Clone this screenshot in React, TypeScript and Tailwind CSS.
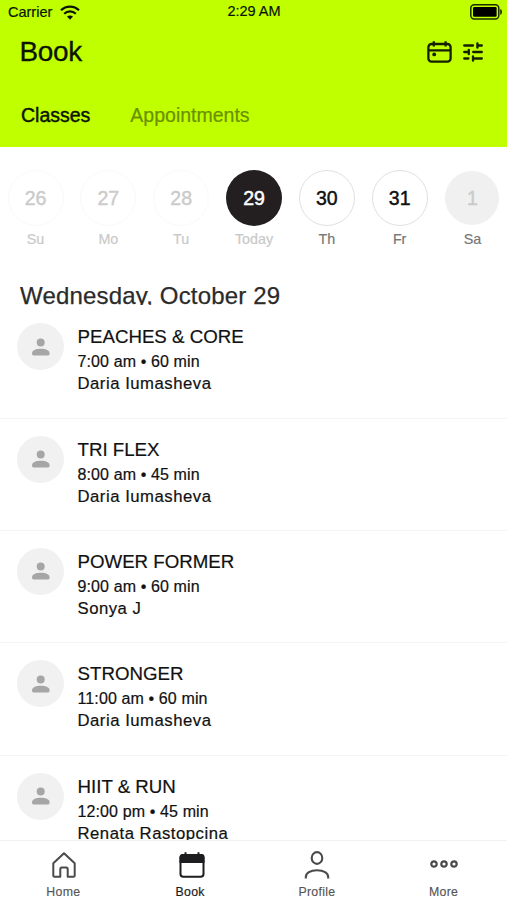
import type { ReactNode } from "react";

type Day = { date: string; label: string; circle: string; text: string };

const days: Day[] = [
  { date: "26", label: "Su", circle: "h-[56px] w-[56px] border border-[#fafafa] text-[#cbcbcb]", text: "text-[#c9c9c9]" },
  { date: "27", label: "Mo", circle: "h-[56px] w-[56px] border border-[#fafafa] text-[#cbcbcb]", text: "text-[#c9c9c9]" },
  { date: "28", label: "Tu", circle: "h-[56px] w-[56px] border border-[#fafafa] text-[#cbcbcb]", text: "text-[#c9c9c9]" },
  { date: "29", label: "Today", circle: "h-[56px] w-[56px] bg-[#231f20] text-white", text: "text-[#c9c9c9]" },
  { date: "30", label: "Th", circle: "h-[56px] w-[56px] border border-[#e0e0e0] text-[#111]", text: "text-[#777]" },
  { date: "31", label: "Fr", circle: "h-[56px] w-[56px] border border-[#e0e0e0] text-[#111]", text: "text-[#777]" },
  { date: "1", label: "Sa", circle: "h-[54px] w-[54px] bg-[#f0f0f0] text-[#cbcbcb]", text: "text-[#777]" },
];

const classes = [
  { title: "PEACHES & CORE", time: "7:00 am • 60 min", coach: "Daria Iumasheva" },
  { title: "TRI FLEX", time: "8:00 am • 45 min", coach: "Daria Iumasheva" },
  { title: "POWER FORMER", time: "9:00 am • 60 min", coach: "Sonya J" },
  { title: "STRONGER", time: "11:00 am • 60 min", coach: "Daria Iumasheva" },
  { title: "HIIT & RUN", time: "12:00 pm • 45 min", coach: "Renata Rastopcina" },
];

function Wifi() {
  return (
    <svg width="20" height="15" viewBox="0 0 20 15" fill="none" stroke="#0b1400" strokeWidth="2.2">
      <path d="M1 5.2C6 .3 14 .3 19 5.2" />
      <path d="M4.2 8.7c3.3-3.2 8.3-3.2 11.6 0" />
      <path d="M7 11.5c1.7-1.5 4.3-1.5 6 0L10 14.7z" fill="#0b1400" stroke="none" />
    </svg>
  );
}

function Battery() {
  return (
    <svg width="33" height="16" viewBox="0 0 33 16">
      <rect x=".8" y=".8" width="28" height="14.2" rx="3.4" fill="none" stroke="#1c2c00" strokeWidth="1.5" />
      <rect x="3" y="3" width="23.6" height="9.8" rx="1.2" fill="#000" />
      <path d="M30.2 5c2.4.6 2.4 5.2 0 5.8z" fill="#1c2c00" />
    </svg>
  );
}

function CalendarIcon() {
  return (
    <svg width="25" height="22" viewBox="0 0 25 22" fill="none" stroke="#142000" strokeWidth="2.3">
      <rect x="1.4" y="3" width="22.2" height="17.6" rx="3.2" />
      <path d="M1.4 9.4h22.2M6.8 .2v5.2M18.6 .2v5.2" />
      <circle cx="7.2" cy="13.4" r="1.9" fill="#142000" stroke="none" />
    </svg>
  );
}

function TuneIcon() {
  return (
    <svg width="20" height="20" viewBox="0 0 20 20" fill="none" stroke="#142000" strokeWidth="2.3" strokeLinecap="round">
      <path d="M1.2 3.5h8.8M14.6 3.5h4.2M14.4 1.3v4.4M1.2 10h4.4M5.8 7.8v4.4M10.2 10h8.6M1.2 16.5h4.2M10.2 16.5h8.6M10 14.3v4.4" />
    </svg>
  );
}

function HomeIcon() {
  return (
    <svg width="24" height="26" viewBox="0 0 24 26" fill="none" stroke="#4a4a4d" strokeWidth="2" strokeLinejoin="round" className="translate-x-px">
      <path d="M1.3 11.2 12 1.2l10.7 10V23.3c0 .9-.6 1.5-1.5 1.5h-5.5v-7.6c0-1-.6-1.6-1.6-1.6H9.9c-1 0-1.6.6-1.6 1.6v7.6H2.8c-.9 0-1.5-.6-1.5-1.5z" />
    </svg>
  );
}

function BookIcon() {
  return (
    <svg width="26" height="26" viewBox="0 0 26 26" fill="none" stroke="#1d1d1f" strokeWidth="2" className="translate-x-[2px]">
      <rect x="1.5" y="3" width="23" height="21.8" rx="2.8" />
      <path d="M1.5 10V5A2 2 0 0 1 3.5 3h19a2 2 0 0 1 2 2v5z" fill="#1d1d1f" />
      <path d="M6.5.2v3M19.5.2v3" />
    </svg>
  );
}

function ProfileIcon() {
  return (
    <svg width="26" height="28" viewBox="0 0 26 28" fill="none" stroke="#4a4a4d" strokeWidth="2.1">
      <ellipse cx="13" cy="7" rx="5.3" ry="5.9" />
      <path d="M1.8 27.5v-1.2c0-4.2 4.5-7 11.2-7s11.2 2.8 11.2 7v1.2" />
    </svg>
  );
}

function MoreIcon() {
  return (
    <svg width="28" height="8" viewBox="0 0 28 8" fill="none" stroke="#4a4a4d" strokeWidth="2.2" className="-translate-y-px">
      <circle cx="4" cy="4" r="2.7" />
      <circle cx="14" cy="4" r="2.7" />
      <circle cx="24" cy="4" r="2.7" />
    </svg>
  );
}

function Avatar() {
  return (
    <div className="flex h-[47px] w-[47px] shrink-0 items-center justify-center rounded-full bg-[#f1f1f1]">
      <svg width="18" height="18" viewBox="0 0 18 18" fill="#a6a6a6">
        <circle cx="8.7" cy="4.5" r="4" />
        <path d="M0 15.6c0-3.4 4-4.8 8.8-4.8s8.8 1.4 8.8 4.8c0 1.2-.6 1.9-1.6 1.9H1.6c-1 0-1.6-.7-1.6-1.9z" />
      </svg>
    </div>
  );
}

function NavItem({ icon, label, active }: { icon: ReactNode; label: string; active?: boolean }) {
  return (
    <div className="flex flex-1 flex-col items-center">
      <div className="flex h-[29px] items-center">{icon}</div>
      <span
        className={`mt-[5px] text-[12.3px] leading-[16px] tracking-[0.3px] ${
          active ? "text-[#1d1d1f] [-webkit-text-stroke:0.2px]" : "text-[#555] [-webkit-text-stroke:0.15px]"
        }`}
      >
        {label}
      </span>
    </div>
  );
}

export default function App() {
  return (
    <div className="flex h-[900px] w-[507px] flex-col overflow-hidden bg-white font-['Liberation_Sans',Arial,sans-serif] text-[#111]">
      <header className="h-[147px] shrink-0 bg-[#bfff00] text-[#0b1400]">
        <div className="grid h-6 grid-cols-3 items-center pr-1 pl-2 text-[14.5px] [-webkit-text-stroke:0.2px]">
          <div className="flex items-center gap-2">
            <span className="pt-[2px]">Carrier</span>
            <Wifi />
          </div>
          <span className="pr-[3px] text-center">2:29 AM</span>
          <div className="flex justify-end">
            <Battery />
          </div>
        </div>
        <div className="flex h-[56px] items-center justify-between pr-6 pl-[19.5px]">
          <h1 className="text-[27.9px] tracking-[-0.3px] [-webkit-text-stroke:0.3px]">Book</h1>
          <div className="flex items-center gap-[11px]">
            <CalendarIcon />
            <TuneIcon />
          </div>
        </div>
        <div className="flex h-[67px] items-center gap-10 pt-[5px] pl-[21px] text-[19.5px]">
          <span className="[-webkit-text-stroke:0.45px]">Classes</span>
          <span className="text-[#6a9000] [-webkit-text-stroke:0.2px]">Appointments</span>
        </div>
      </header>

      <section className="flex shrink-0 justify-between pt-[23px] pr-[7px] pl-2">
        {days.map((d) => (
          <div key={d.label} className="flex w-[55px] flex-col items-center">
            <div className="flex h-[56px] items-center">
              <div
                className={`flex shrink-0 items-center justify-center rounded-full pt-px text-[19.5px] [-webkit-text-stroke:0.45px] ${d.circle}`}
              >
                {d.date}
              </div>
            </div>
            <span className={`mt-[4px] text-[14.3px] leading-[18px] [-webkit-text-stroke:0.2px] ${d.text}`}>{d.label}</span>
          </div>
        ))}
      </section>

      <h2 className="mt-[33px] mb-px ml-5 h-[24px] shrink-0 overflow-hidden text-[24px] leading-[29px] tracking-[0.18px] whitespace-nowrap text-[#2b2b2b] [-webkit-text-stroke:0.25px]">
        Wednesday, October 29
      </h2>

      <main className="min-h-0 flex-1 overflow-hidden pt-[0.2px]">
        {classes.map((c) => (
          <article key={c.title} className="flex h-[112.4px] gap-[13.5px] border-b border-[#f4f4f4] pt-[17px] pl-[17px]">
            <Avatar />
            <div className="flex flex-col pt-[2px] whitespace-nowrap [-webkit-text-stroke:0.2px]">
              <h3 className="text-[18.7px] leading-[24px]">{c.title}</h3>
              <p className="pt-px text-[16px] leading-[23px] tracking-[0.12px]">{c.time}</p>
              <p className="text-[16.7px] leading-[22px] tracking-[0.52px]">{c.coach}</p>
            </div>
          </article>
        ))}
      </main>

      <nav className="flex h-[60px] shrink-0 border-t border-[#f1f1f1] bg-white pt-[9px]">
        <NavItem icon={<HomeIcon />} label="Home" />
        <NavItem icon={<BookIcon />} label="Book" active />
        <NavItem icon={<ProfileIcon />} label="Profile" />
        <NavItem icon={<MoreIcon />} label="More" />
      </nav>
    </div>
  );
}
